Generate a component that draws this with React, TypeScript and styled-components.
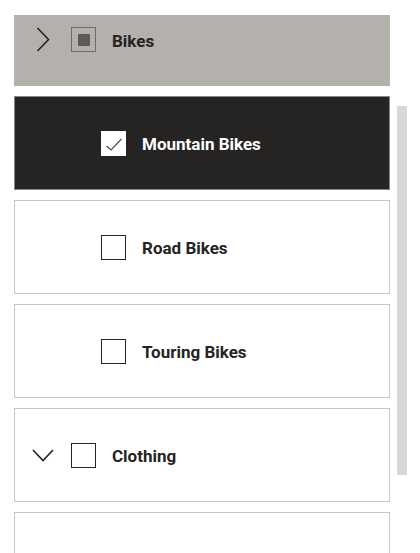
import { createGlobalStyle, styled } from 'styled-components';

const GlobalStyle = createGlobalStyle`
  html, body {
    margin: 0;
    padding: 0;
    background: #ffffff;
    overflow: hidden;
  }
  body {
    font-family: Roboto, 'Liberation Sans', sans-serif;
  }
`;

const Page = styled.div`
  display: flex;
  align-items: flex-start;
  padding: 15px 0 0 14px;
  height: 553px;
  box-sizing: border-box;
  overflow: hidden;
`;

const List = styled.div`
  width: 376px;
  display: flex;
  flex-direction: column;
  gap: 10px;
`;

const ScrollTrack = styled.div`
  width: 10px;
  height: 369px;
  margin: 91px 0 0 7px;
  background: #d9d8d7;
`;

const HeaderRow = styled.div`
  height: 71px;
  box-sizing: border-box;
  background: #b4b0ac;
  display: flex;
  align-items: flex-start;
  padding: 12px 0 0 18px;
`;

const Row = styled.div<{ $selected?: boolean; $level: number }>`
  height: 94px;
  box-sizing: border-box;
  display: flex;
  align-items: center;
  padding-left: ${(p) => 17 + p.$level * 30}px;
  background: ${(p) => (p.$selected ? '#252423' : '#ffffff')};
  border: 1px solid ${(p) => (p.$selected ? '#8a8886' : '#c8c6c4')};
`;

const Expander = styled.div`
  width: 22px;
  height: 25px;
  display: flex;
  align-items: center;
  justify-content: center;
  margin-right: 17px;
  flex: none;
`;

const Box = styled.div<{ $checked?: boolean; $partial?: boolean }>`
  width: 25px;
  height: 25px;
  box-sizing: border-box;
  flex: none;
  display: flex;
  align-items: center;
  justify-content: center;
  background: ${(p) => (p.$checked ? '#ffffff' : 'transparent')};
  border: 1px solid ${(p) => (p.$checked ? '#ffffff' : p.$partial ? '#6e6c6a' : '#252423')};
`;

const Partial = styled.div`
  width: 12px;
  height: 12px;
  background: #5d5b59;
`;

const Label = styled.span<{ $light?: boolean }>`
  margin-left: 16px;
  font-size: 17px;
  font-weight: 700;
  line-height: 25px;
  padding-top: 2px;
  color: ${(p) => (p.$light ? '#ffffff' : '#252423')};
  white-space: nowrap;
`;

function ChevronRight() {
  return (
    <svg width='14' height='25' viewBox='0 0 14 25'>
      <path d='M1.5 1 L12.5 12.5 L1.5 24' fill='none' stroke='#252423' strokeWidth='1.6' />
    </svg>
  );
}

function ChevronDown() {
  return (
    <svg width='22' height='13' viewBox='0 0 22 13'>
      <path d='M1 1 L11 11.5 L21 1' fill='none' stroke='#252423' strokeWidth='1.6' />
    </svg>
  );
}

function Check() {
  return (
    <svg width='23' height='23' viewBox='0 0 23 23'>
      <path d='M4.5 14 L9 18 L19.5 7' fill='none' stroke='#4a4846' strokeWidth='1.1' />
    </svg>
  );
}

const items = [
  { label: 'Mountain Bikes', level: 1, checked: true },
  { label: 'Road Bikes', level: 1 },
  { label: 'Touring Bikes', level: 1 },
];

export default function App() {
  return (
    <>
      <GlobalStyle />
      <Page>
        <List>
          <HeaderRow>
            <Expander>
              <ChevronRight />
            </Expander>
            <Box $partial>
              <Partial />
            </Box>
            <Label>Bikes</Label>
          </HeaderRow>
          {items.map((it) => (
            <Row key={it.label} $level={it.level} $selected={it.checked}>
              <Expander />
              <Box $checked={it.checked}>{it.checked && <Check />}</Box>
              <Label $light={it.checked}>{it.label}</Label>
            </Row>
          ))}
          <Row $level={0}>
            <Expander>
              <ChevronDown />
            </Expander>
            <Box />
            <Label>Clothing</Label>
          </Row>
          <Row $level={0} />
        </List>
        <ScrollTrack />
      </Page>
    </>
  );
}
